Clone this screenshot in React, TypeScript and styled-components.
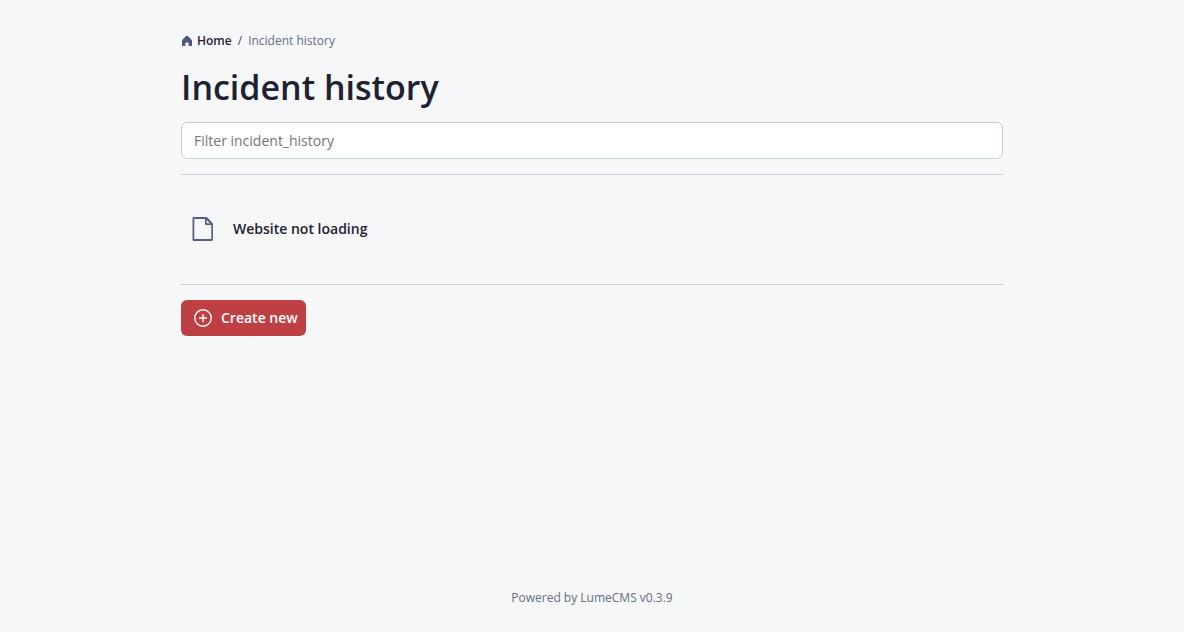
import React from "react";
import styled, { createGlobalStyle } from "styled-components";

const GlobalStyle = createGlobalStyle`
  *, *::before, *::after { box-sizing: border-box; }
  body {
    margin: 0;
    background: #f6f7f9;
    color: #1e2230;
    font-family: "Segoe UI", "Open Sans", "Noto Sans", sans-serif;
    font-size: 14px;
    line-height: 20px;
  }
`;

const Page = styled.div`
  display: flex;
  flex-direction: column;
  min-height: 100vh;
  padding: 32px 24px 24px;
`;

const Content = styled.main`
  flex: 1;
  width: 100%;
  max-width: 822px;
  margin: 0 auto;
`;

const Breadcrumb = styled.ol`
  display: flex;
  align-items: center;
  gap: 6px;
  margin: 0;
  padding: 0;
  list-style: none;
  font-size: 12px;
  line-height: 18px;
  color: #646e80;

  li + li::before {
    content: "/";
    margin-right: 6px;
    color: #3c4252;
  }
`;

const HomeLink = styled.a`
  display: flex;
  align-items: center;
  gap: 4px;
  color: #1e2230;
  font-weight: 600;
  text-decoration: none;
`;

const Title = styled.h1`
  margin: 14px 0 12px;
  font-size: 34px;
  line-height: 46px;
  font-weight: 600;
`;

const Filter = styled.input`
  display: block;
  width: 100%;
  height: 37px;
  padding: 0 12px;
  border: 1px solid #c8cdd7;
  border-radius: 6px;
  background: #fff;
  color: inherit;
  font: inherit;

  &::placeholder { color: #757575; opacity: 1; }
`;

const List = styled.ul`
  margin: 15px 0;
  padding: 32px 0;
  border: solid #c8cdd7;
  border-width: 1px 0;
  list-style: none;
`;

const ItemLink = styled.a`
  display: flex;
  align-items: center;
  gap: 16px;
  min-height: 45px;
  padding: 0 8px 1px;
  color: #1e2230;
  font-weight: 600;
  text-decoration: none;
`;

const CreateButton = styled.button`
  display: inline-flex;
  align-items: center;
  gap: 7px;
  height: 36px;
  padding: 0 8px 0 11px;
  border: 0;
  border-radius: 6px;
  background: #bf4043;
  color: #fff;
  font: inherit;
  font-weight: 600;
  cursor: pointer;
`;

const Footer = styled.footer`
  text-align: center;
  font-size: 12px;
  color: #646e80;
`;

const Icon = styled.svg<{ $size: number; $color: string }>`
  flex: none;
  width: ${(p) => p.$size}px;
  height: ${(p) => p.$size}px;
  fill: ${(p) => p.$color};
`;

const HomeIcon = () => (
  <Icon $size={12} $color="#4c5a7c" viewBox="0 0 12 12" aria-hidden="true">
    <path d="M5.2 1.100a1.200 1.200 0 0 1 1.600 0l3.800 3.600c.3.3.4.6.4 1v4.700a.7.7 0 0 1-.7.7H8.100a.5.5 0 0 1-.5-.5V8a.6.6 0 0 0-.6-.6H5a.6.6 0 0 0-.6.6v2.600a.5.5 0 0 1-.5.5H1.700a.7.7 0 0 1-.7-.7V5.700c0-.4.1-.7.4-1z" />
  </Icon>
);

const FileIcon = () => (
  <Icon $size={28} $color="#55627f" viewBox="0 0 28 28" aria-hidden="true">
    <path
      fillRule="evenodd"
      d="M5 2h12.200c.5 0 .9.2 1.200.5l5.100 5.600c.3.3.5.7.5 1.200v15.200c0 .8-.7 1.500-1.500 1.500H5c-.8 0-1.500-.7-1.500-1.500v-21C3.500 2.700 4.200 2 5 2zM5.300 4v20h17V10h-5c-.7 0-1.300-.6-1.300-1.300V4zM17.700 4.900v3.400h3.200z"
    />
  </Icon>
);

const PlusCircleIcon = () => (
  <Icon $size={22} $color="#fff" viewBox="0 0 256 256" aria-hidden="true">
    <path d="M128 24a104 104 0 1 0 104 104A104.11 104.11 0 0 0 128 24zm0 192a88 88 0 1 1 88-88 88.1 88.1 0 0 1-88 88zm48-88a8 8 0 0 1-8 8h-32v32a8 8 0 0 1-16 0v-32H88a8 8 0 0 1 0-16h32V88a8 8 0 0 1 16 0v32h32a8 8 0 0 1 8 8z" />
  </Icon>
);

export default function App() {
  return (
    <Page>
      <GlobalStyle />
      <Content>
        <nav aria-label="Breadcrumb">
          <Breadcrumb>
            <li>
              <HomeLink href="#home">
                <HomeIcon />
                Home
              </HomeLink>
            </li>
            <li aria-current="page">Incident history</li>
          </Breadcrumb>
        </nav>
        <Title>Incident history</Title>
        <Filter type="search" placeholder="Filter incident_history" aria-label="Filter incident_history" />
        <List>
          <li>
            <ItemLink href="#website-not-loading">
              <FileIcon />
              Website not loading
            </ItemLink>
          </li>
        </List>
        <CreateButton type="button">
          <PlusCircleIcon />
          Create new
        </CreateButton>
      </Content>
      <Footer>Powered by LumeCMS v0.3.9</Footer>
    </Page>
  );
}
